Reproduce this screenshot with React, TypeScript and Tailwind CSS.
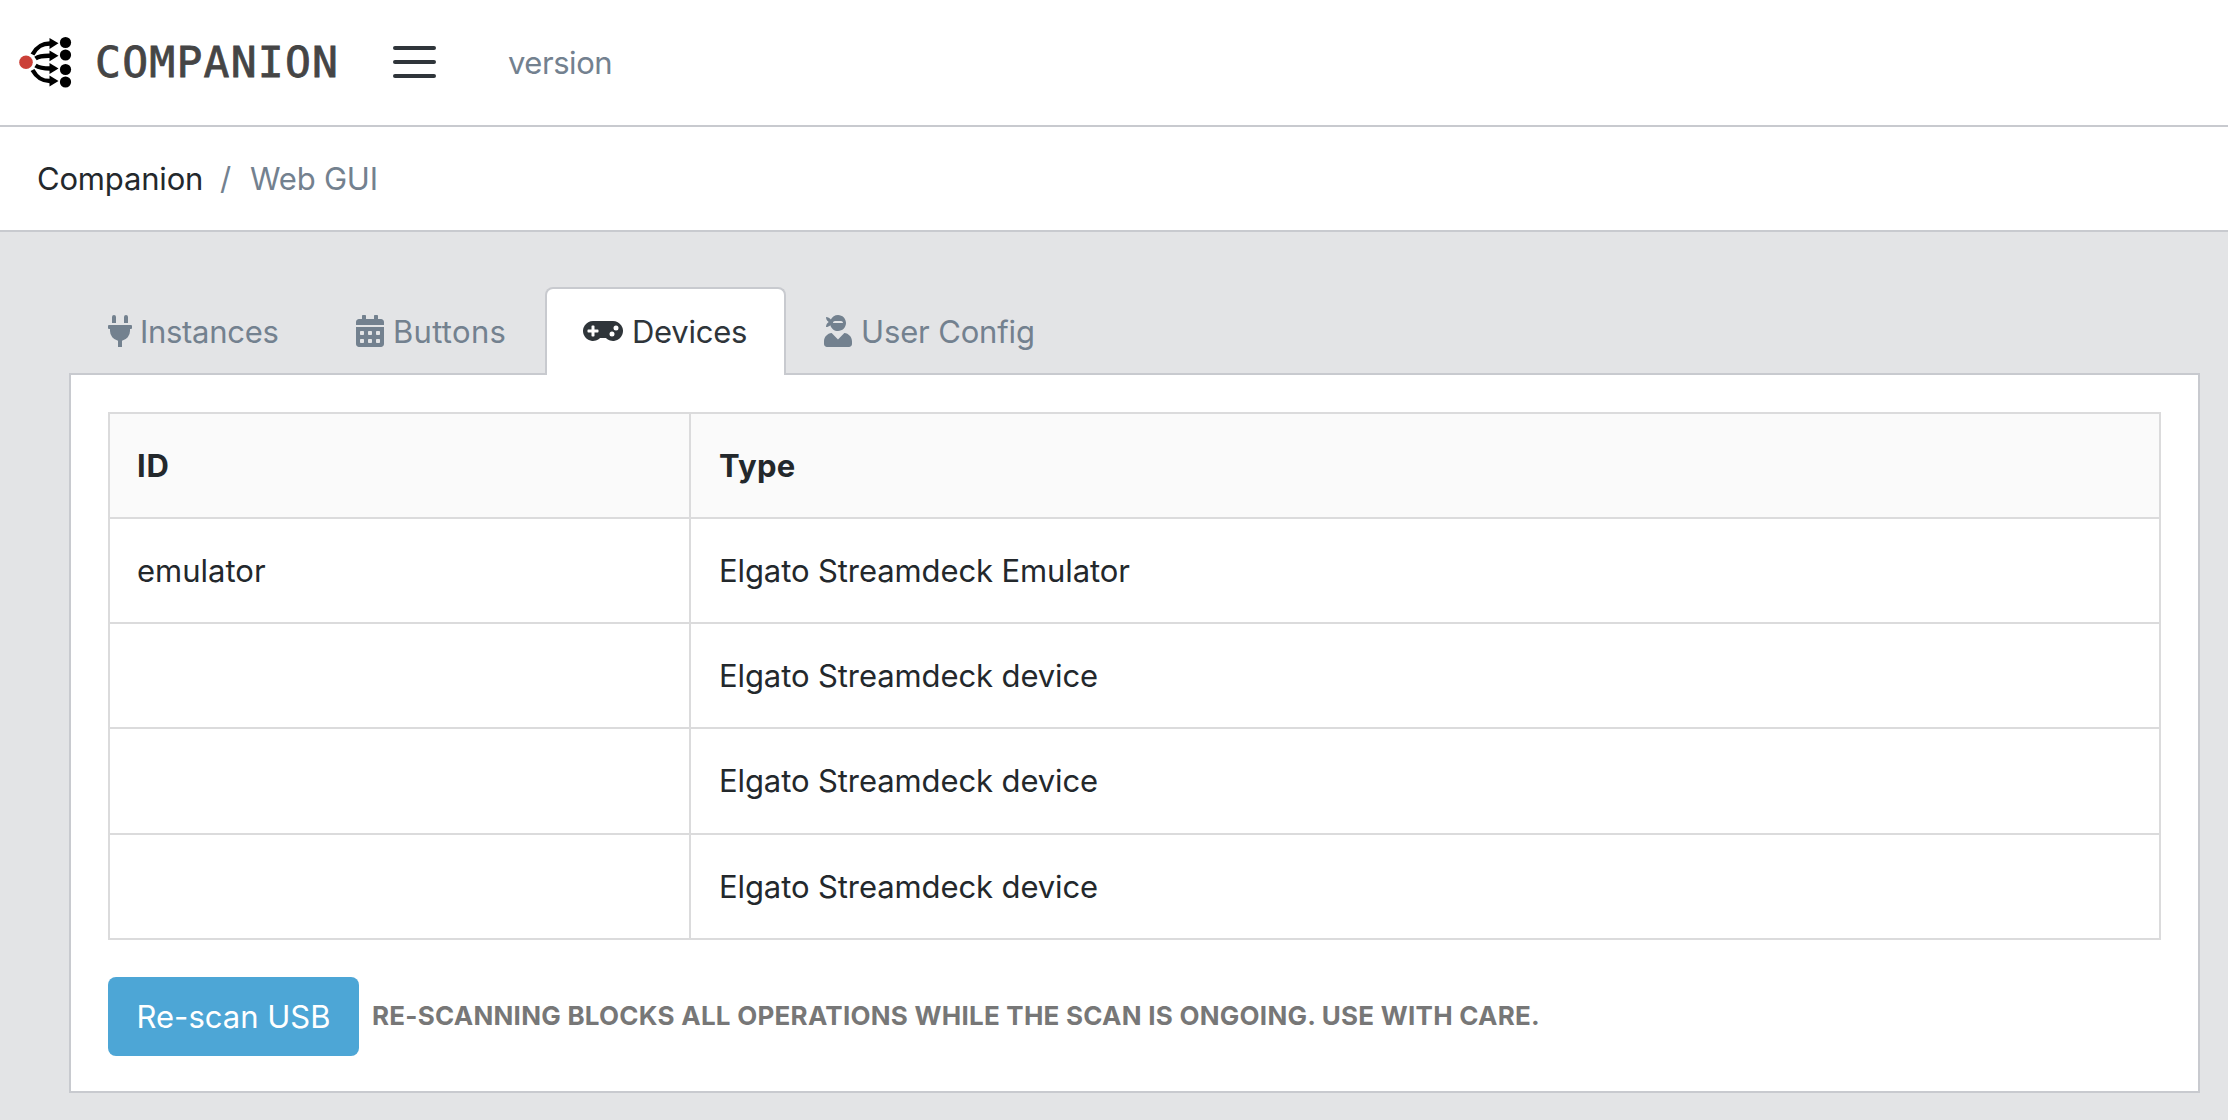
import type { ReactNode } from "react";
import { FaCalendarAlt, FaGamepad, FaPlug, FaUserNinja } from "react-icons/fa";

const devices = [
  { id: "emulator", type: "Elgato Streamdeck Emulator" },
  { id: "", type: "Elgato Streamdeck device" },
  { id: "", type: "Elgato Streamdeck device" },
  { id: "", type: "Elgato Streamdeck device" },
];

function LogoMark() {
  return (
    <svg className="mb-px h-[52px] w-[54px] shrink-0" viewBox="0 0 54 52" fill="none">
      <g stroke="#000" strokeWidth="4.4">
        <path d="M13.5 18.5C18 10.500 23 7.500 31 7.500" />
        <path d="M16.500 22.500C20.500 19.800 25 19.700 31 19.800" />
        <path d="M16.500 29.500C20.500 32 25 32.500 31 32.500" />
        <path d="M13.500 34C18 42 23 45 31 45" />
      </g>
      <g fill="#000">
        <path d="M30.500 2L39.500 7.300L30.500 13Z" />
        <path d="M30.500 14.500L39.500 19.800L30.500 25.300Z" />
        <path d="M30.500 27L39.500 32.500L30.500 38Z" />
        <path d="M30.500 39.500L39.500 45L30.500 50.500Z" />
        <circle cx="46.500" cy="6.500" r="5.600" />
        <circle cx="46.500" cy="19" r="5.600" />
        <circle cx="46.500" cy="33.500" r="5.600" />
        <circle cx="46.500" cy="46" r="5.600" />
      </g>
      <circle cx="7" cy="26.300" r="6.800" fill="#cb4038" />
    </svg>
  );
}

function Tab({ className, icon, children }: { className: string; icon: ReactNode; children: ReactNode }) {
  return (
    <div className={`flex h-[88px] items-center border-2 border-b-0 pb-px whitespace-nowrap ${className}`}>
      {icon}
      {children}
    </div>
  );
}

export default function App() {
  return (
    <div className="flex h-[1120px] w-[2228px] flex-col overflow-hidden bg-[#e3e4e6] font-['Inter',sans-serif] text-[31px] leading-[48px] text-[#23282c]">
      <header className="flex h-[127px] shrink-0 items-center border-b-2 border-[#c8cacf] bg-white pl-[19px]">
        <LogoMark />
        <span className="mb-0.5 ml-[22px] w-[250px] font-['DejaVu_Sans_Mono',monospace] text-[43px] tracking-[1.25px] text-[#454545] [-webkit-text-stroke:0.8px_#454545]">
          COMPANION
        </span>
        <div className="mb-px ml-[48px] flex w-[43px] flex-col gap-2.5">
          <span className="h-1 rounded-full bg-[#2f353a]" />
          <span className="h-1 rounded-full bg-[#2f353a]" />
          <span className="h-1 rounded-full bg-[#2f353a]" />
        </div>
        <span className="ml-[72px] tracking-[-0.45px] text-[#73818f]">version</span>
      </header>

      <nav className="flex h-[105px] shrink-0 items-center border-b-2 border-[#c8cacf] bg-white pl-[37px]">
        <span className="w-[183px] tracking-[-0.18px]">Companion</span>
        <span className="w-[30px] text-[#73818f]">/</span>
        <span className="tracking-[-0.2px] text-[#73818f]">Web GUI</span>
      </nav>

      <main className="flex flex-col pt-[55px] pr-7 pl-[69px]">
        <div className="relative -mb-0.5 flex text-[#73818f]">
          <Tab className="w-[238px] border-transparent pl-[35px] tracking-[-0.3px]" icon={<FaPlug className="mr-[6px] mb-px h-8 w-[28px] shrink-0" />}>
            Instances
          </Tab>
          <Tab className="w-[238px] border-transparent pl-[47px] tracking-[0.29px]" icon={<FaCalendarAlt className="mr-[9px] mb-px h-8 w-[28px] shrink-0" />}>
            Buttons
          </Tab>
          <Tab
            className="w-[241px] rounded-t-lg border-[#c8cacf] bg-white pl-[36px] tracking-[-0.25px] text-[#2f353a]"
            icon={<FaGamepad className="mr-[9px] mb-px h-8 w-10 shrink-0" />}
          >
            Devices
          </Tab>
          <Tab className="border-transparent pl-[36px] tracking-[-0.15px]" icon={<FaUserNinja className="mr-[9px] mb-px h-8 w-[28px] shrink-0" />}>
            User Config
          </Tab>
        </div>

        <section className="h-[720px] border-2 border-[#c8cacf] bg-white px-[37px] pt-[37px]">
          <div className="border-2 border-[#dbdbdc]">
            <div className="grid h-[105px] grid-cols-[581px_1fr] border-b-2 border-[#dbdbdc] bg-[#fafafa] font-bold">
              <div className="flex items-center border-r-2 border-[#dbdbdc] pl-[27px] tracking-[0.8px]">ID</div>
              <div className="flex items-center pl-[28px] tracking-[0.3px]">Type</div>
            </div>
            {devices.map((device, i) => (
              <div
                key={i}
                className="grid h-[105px] grid-cols-[581px_1fr] border-b-2 border-[#dbdbdc] nth-4:h-[106px] last:h-[103px] last:border-b-0"
              >
                <div className="flex items-center border-r-2 border-[#dbdbdc] pl-[27px]">{device.id}</div>
                <div className="flex items-center pl-[28px] tracking-[-0.1px]">{device.type}</div>
              </div>
            ))}
          </div>

          <div className="mt-[37px] flex items-center">
            <button className="flex h-[79px] w-[251px] items-center justify-center rounded-lg bg-[#4da6d6] text-white">Re-scan USB</button>
            <span className="mb-0.5 ml-[13px] text-[26px] font-bold tracking-[0.25px] whitespace-nowrap text-[#777] uppercase">
              Re-scanning blocks all operations while the scan is ongoing. Use with care.
            </span>
          </div>
        </section>
      </main>
    </div>
  );
}
